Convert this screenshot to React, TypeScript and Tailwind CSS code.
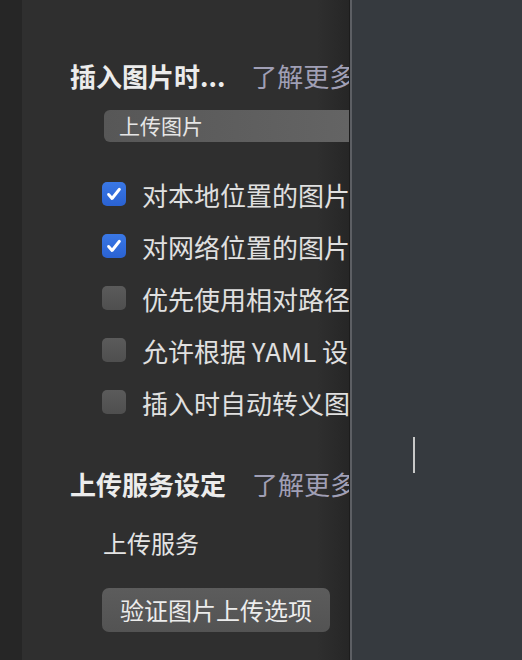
import React from "react";

const options = [
  { label: "对本地位置的图片应用上述规则", checked: true },
  { label: "对网络位置的图片应用上述规则", checked: true },
  { label: "优先使用相对路径", checked: false },
  { label: "允许根据 YAML 设置自动上传图片", checked: false },
  { label: "插入时自动转义图片 URL", checked: false },
];

const Checkbox: React.FC<{ checked: boolean }> = ({ checked }) =>
  checked ? (
    <div className="w-[24px] h-[24px] shrink-0 rounded-[5px] bg-gradient-to-b from-[#3a78e6] to-[#2a62d2] flex items-center justify-center">
      <svg className="w-[18px] h-[18px]" viewBox="0 0 16 16" fill="none" stroke="#ffffff" strokeWidth={2.6} strokeLinecap="round" strokeLinejoin="round">
        <path d="M3.2 8.4l3.1 3.6L12.8 3.8" />
      </svg>
    </div>
  ) : (
    <div className="w-[24px] h-[24px] shrink-0 rounded-[5px] bg-gradient-to-b from-[#5b5b5b] to-[#4f4f4f]" />
  );

export default function App() {
  return (
    <div className="w-[522px] h-[660px] flex overflow-hidden font-['Noto_Sans_CJK_SC','Noto_Sans',sans-serif]">
      <div className="w-[22px] shrink-0 bg-[#262626]" />

      {/* preferences panel */}
      <div className="w-[327px] shrink-0 overflow-hidden bg-[linear-gradient(to_right,#2f2f2f_90%,#262626)] pl-[48px] pt-[59px]">
        <div className="flex items-center h-[32px] whitespace-nowrap">
          <span className="text-[26px] font-bold text-[#ececec]">插入图片时...</span>
          <span className="ml-[26px] text-[26px] text-[#a09fb5]">了解更多</span>
        </div>

        <div className="mt-[19px] ml-[34px] w-[300px] h-[32px] rounded-[6px] bg-gradient-to-r from-[#575757] to-[#676767] flex items-center pl-[15px] whitespace-nowrap">
          <span className="text-[21px] text-[#e6e6e6]">上传图片</span>
        </div>

        <div className="mt-[26px] ml-[32px] flex flex-col">
          {options.map((o) => (
            <div key={o.label} className="h-[52px] flex items-center gap-[16px] whitespace-nowrap">
              <Checkbox checked={o.checked} />
              <span className="text-[26px] text-[#e0e0e0]">{o.label}</span>
            </div>
          ))}
        </div>

        <div className="mt-[39px] flex items-center h-[32px] whitespace-nowrap">
          <span className="text-[26px] font-bold text-[#ececec]">上传服务设定</span>
          <span className="ml-[26px] text-[26px] text-[#a09fb5]">了解更多</span>
        </div>

        <div className="mt-[28px] ml-[33px] h-[32px] flex items-center text-[24px] text-[#e4e4e4] whitespace-nowrap">
          上传服务
        </div>

        <button className="mt-[29px] ml-[32px] w-[228px] h-[44px] rounded-[7px] bg-gradient-to-b from-[#5c5c5c] to-[#535353] text-[24px] text-[#ececec] whitespace-nowrap">
          验证图片上传选项
        </button>
      </div>

      <div className="w-[1px] shrink-0 bg-[#1c1c1c]" />
      <div className="w-[2px] shrink-0 bg-[#5d5f64]" />

      {/* editor */}
      <div className="flex-1 bg-[#363a3f] pl-[61px] pt-[437px]">
        <div className="w-[2px] h-[36px] bg-[#c8c8c8]" />
      </div>
    </div>
  );
}
